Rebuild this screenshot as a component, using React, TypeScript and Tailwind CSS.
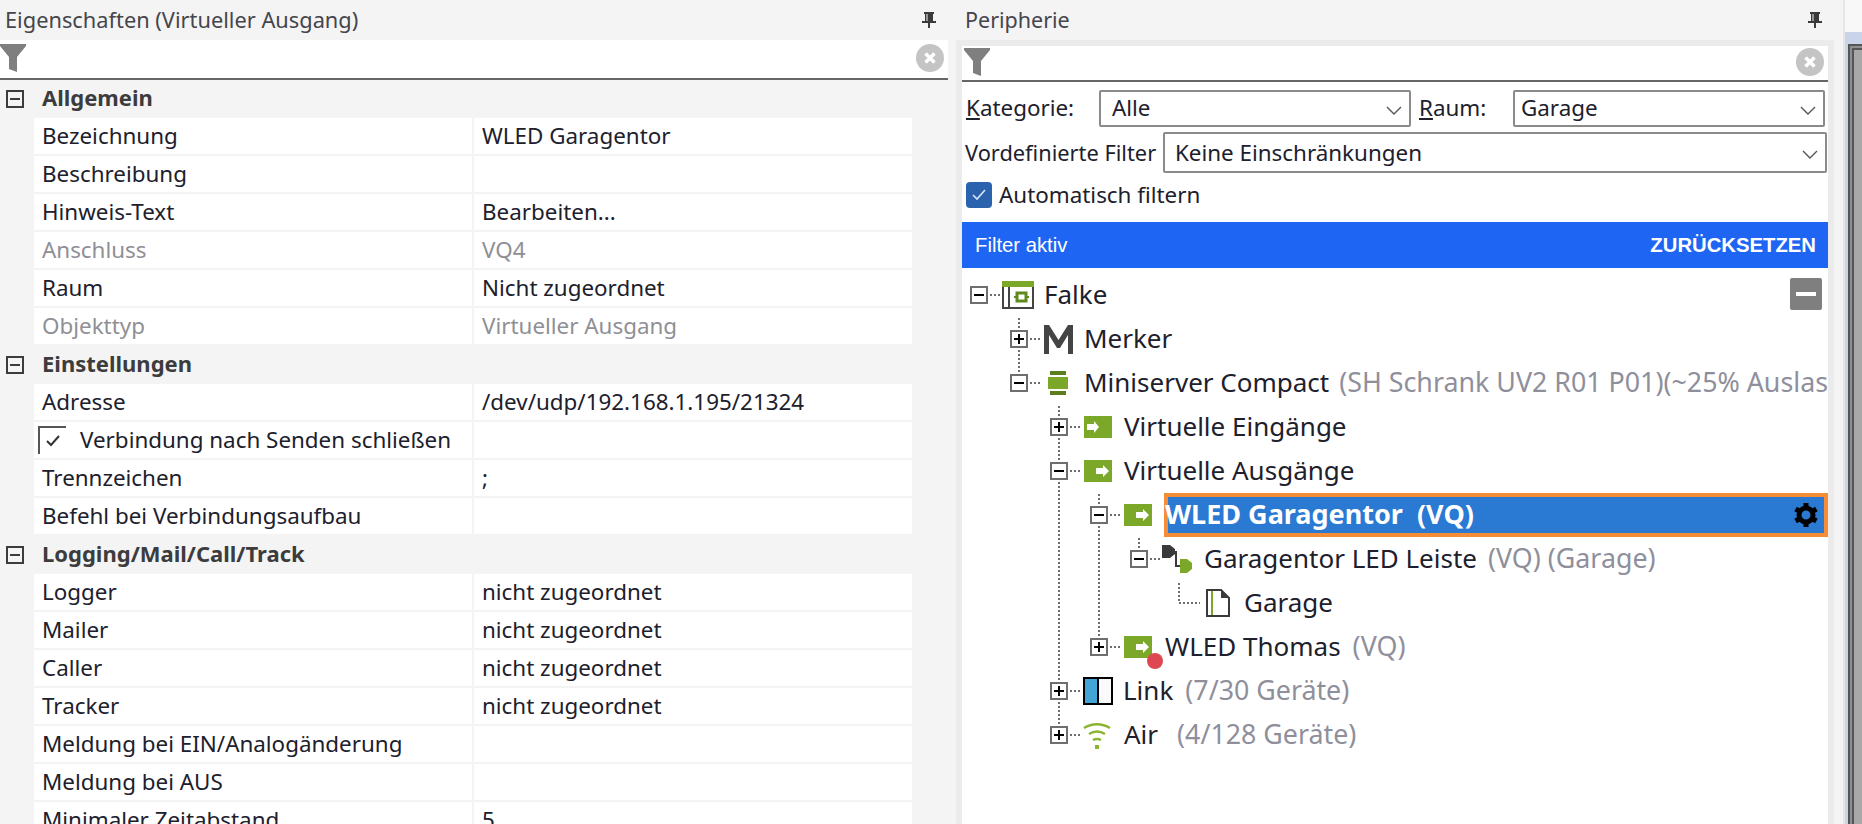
import React from "react";

const font = "font-['Noto_Sans','Open_Sans',sans-serif]";

function PinIcon() {
  return (
    <svg width="14" height="16" viewBox="0 0 14 16">
      <path d="M2 0h10v2h-1v7h3v2h-14v-2h3v-7h-1zM4.500 2v7h1v-7z" fill="#3a3a3a" fillRule="evenodd" />
      <rect x="6" y="11" width="2" height="5" fill="#3a3a3a" />
    </svg>
  );
}

function FunnelIcon() {
  return (
    <svg width="26" height="28" viewBox="0 0 26 28">
      <path d="M0 0h26v2l-9 11v15l-8-3v-12l-9-11z" fill="#7f7f7f" />
    </svg>
  );
}

function ClearIcon() {
  return (
    <svg width="28" height="28" viewBox="0 0 28 28">
      <circle cx="14" cy="14" r="14" fill="#c4c4c4" />
      <path d="M9.500 9.500l9 9M18.500 9.500l-9 9" stroke="#fff" strokeWidth="3.500" />
    </svg>
  );
}

function SectionRow({ title }: { title: string }) {
  return (
    <div className="flex items-center h-[38px]">
      <div className="w-[34px] pl-[6px]">
        <div className="w-[18px] h-[18px] border-2 border-[#3c3c3c] flex items-center justify-center">
          <div className="w-[10px] h-[2px] bg-[#3c3c3c]" />
        </div>
      </div>
      <span className="pl-[8px] pb-[4px] font-bold text-[22px] text-[#3c3c3c]">{title}</span>
    </div>
  );
}

function PropRow({ label, value, muted, check }: { label: string; value?: string; muted?: boolean; check?: boolean }) {
  const color = muted ? "text-[#8f8f95]" : "text-[#20202c]";
  return (
    <div className={`flex gap-[2px] ml-[34px] h-[36px] mb-[2px] w-[878px] ${color}`}>
      <div className="w-[438px] bg-white flex items-center pl-[8px] whitespace-nowrap">
        {check && (
          <div className="w-[28px] h-[28px] -ml-[4px] mr-[14px] border-l-2 border-t-2 border-[#555555] flex items-center justify-center">
            <svg width="16" height="14" viewBox="0 0 16 14" fill="none">
              <path d="M2 7l4 4 8-9" stroke="#333" strokeWidth="2" />
            </svg>
          </div>
        )}
        {label}
      </div>
      <div className="w-[438px] bg-white flex items-center pl-[8px] whitespace-nowrap">{value}</div>
    </div>
  );
}

function Combo({ text, className, textClass }: { text: string; className: string; textClass?: string }) {
  return (
    <div className={`flex items-center justify-between border-2 border-[#8a8a8a] rounded-[2px] bg-white text-[#20202c] ${className}`}>
      <span className={textClass}>{text}</span>
      <svg width="16" height="9" viewBox="0 0 16 9" fill="none" className="mr-[7px] mt-[3px]">
        <path d="M1 1l7 7 7-7" stroke="#555555" strokeWidth="1.400" />
      </svg>
    </div>
  );
}

function Expander({ open }: { open: boolean }) {
  return (
    <div className="w-[18px] h-[18px] shrink-0 border-2 border-[#6e6e6e] bg-white flex items-center justify-center relative">
      <div className="w-[10px] h-[2px] bg-black" />
      {!open && <div className="absolute w-[2px] h-[10px] bg-black" />}
    </div>
  );
}

function ArrowIcon({ input }: { input?: boolean }) {
  return (
    <svg width="28" height="22" viewBox="0 0 28 22">
      <rect width="28" height="22" fill="#7ca82a" />
      <path d={input ? "M3 8h7v-3l5 6-5 6v-3h-7z" : "M12 8h7v-3l6 6-6 6v-3h-7z"} fill="#fff" />
    </svg>
  );
}

function FalkeIcon() {
  return (
    <svg width="32" height="28" viewBox="0 0 32 28" fill="none">
      <rect width="32" height="6" fill="#7ca82a" />
      <path d="M1 6v21h30v-21M7 6v21" stroke="#444" strokeWidth="2" />
      <rect x="15" y="12" width="9" height="8" stroke="#5d8a1e" strokeWidth="3" />
      <path d="M12 16h3M24 16h3" stroke="#5d8a1e" strokeWidth="2" />
    </svg>
  );
}

function MerkerIcon() {
  return (
    <svg width="29" height="29" viewBox="0 0 29 29">
      <path d="M0 29v-29h5l9.500 15 9.500-15h5v29h-5v-19l-8 13h-3l-8-13v19z" fill="#444444" />
    </svg>
  );
}

function MiniserverIcon() {
  return (
    <svg width="20" height="24" viewBox="0 0 20 24">
      <rect x="2" y="0" width="16" height="4" fill="#5b7f1c" />
      <rect x="0" y="6" width="20" height="12" fill="#7ca82a" />
      <rect x="2" y="20" width="16" height="4" fill="#5b7f1c" />
    </svg>
  );
}

function ActuatorIcon() {
  return (
    <svg width="31" height="28" viewBox="0 0 31 28">
      <path d="M0 0h8l5 4v5l-5 4h-8z" fill="#3a3a3a" />
      <path d="M14 6v15h4" fill="none" stroke="#3a3a3a" strokeWidth="2" />
      <path d="M18 14h7l5 4v6l-5 4h-7z" fill="#7ca82a" />
    </svg>
  );
}

function PageIcon() {
  return (
    <svg width="24" height="28" viewBox="0 0 24 28" fill="none">
      <path d="M1 1h14l8 8v18h-22z" stroke="#3a3a3a" strokeWidth="2" fill="#fff" />
      <path d="M15 1l8 8h-8z" fill="#3a3a3a" />
      <rect x="5" y="2" width="2" height="24" fill="#7ca82a" />
    </svg>
  );
}

function LinkIcon() {
  return (
    <svg width="30" height="28" viewBox="0 0 30 28">
      <rect x="1" y="1" width="28" height="26" fill="#fafafa" stroke="#000" strokeWidth="2" />
      <rect x="2" y="2" width="12" height="24" fill="#42a5d5" />
      <rect x="14" y="1" width="2" height="26" fill="#000" />
    </svg>
  );
}

function AirIcon() {
  return (
    <svg width="28" height="28" viewBox="0 0 28 28" fill="none" stroke="#8cb52f" strokeWidth="2.500">
      <path d="M1 7c8-5 18-5 26 0" />
      <path d="M6 13c5-3 11-3 16 0" />
      <path d="M10 19c3-1.500 5-1.500 8 0" />
      <rect x="12" y="24" width="4" height="4" fill="#8cb52f" stroke="none" />
    </svg>
  );
}

function GearIcon() {
  return (
    <svg width="24" height="24" viewBox="0 0 24 24" fill="none" stroke="#000">
      <circle cx="12" cy="12" r="7" strokeWidth="5" />
      <path d="M12 0v5M12 19v5M1.600 6l4.300 2.500M18.100 15.500l4.300 2.500M22.400 6l-4.300 2.500M5.900 15.500l-4.300 2.500" strokeWidth="5" />
    </svg>
  );
}

function TreeLines() {
  return (
    <svg className="absolute left-0 top-0 pointer-events-none" width="866" height="500" fill="none" stroke="#6e6e6e" strokeWidth="2" strokeDasharray="2 2">
      <path d="M28 27h12M68 71h12M68 115h12M108 159h12M108 203h12M148 247h12M188 291h12M148 379h12M108 423h12M108 467h12" />
      <path d="M57 50v54M97 138v320M137 226v144M177 270v11M217 315v20h21" />
    </svg>
  );
}

export default function App() {
  return (
    <div className={`w-[1862px] h-[824px] overflow-hidden flex bg-[#f4f4f4] text-[22.4px] leading-[28px] ${font}`}>
      {/* Eigenschaften */}
      <div className="w-[948px] shrink-0">
        <div className="h-[40px] flex items-center justify-between pl-[5px] pr-[12px] text-[21.8px] text-[#45454c]">
          <span>Eigenschaften (Virtueller Ausgang)</span>
          <PinIcon />
        </div>
        <div className="h-[40px] flex justify-between items-start pt-[4px] pr-[4px] bg-white border-b-2 border-[#666666]">
          <FunnelIcon />
          <ClearIcon />
        </div>
        <SectionRow title="Allgemein" />
        <PropRow label="Bezeichnung" value="WLED Garagentor" />
        <PropRow label="Beschreibung" />
        <PropRow label="Hinweis-Text" value="Bearbeiten..." />
        <PropRow label="Anschluss" value="VQ4" muted />
        <PropRow label="Raum" value="Nicht zugeordnet" />
        <PropRow label="Objekttyp" value="Virtueller Ausgang" muted />
        <SectionRow title="Einstellungen" />
        <PropRow label="Adresse" value="/dev/udp/192.168.1.195/21324" />
        <PropRow label="Verbindung nach Senden schließen" check />
        <PropRow label="Trennzeichen" value=";" />
        <PropRow label="Befehl bei Verbindungsaufbau" />
        <SectionRow title="Logging/Mail/Call/Track" />
        <PropRow label="Logger" value="nicht zugeordnet" />
        <PropRow label="Mailer" value="nicht zugeordnet" />
        <PropRow label="Caller" value="nicht zugeordnet" />
        <PropRow label="Tracker" value="nicht zugeordnet" />
        <PropRow label="Meldung bei EIN/Analogänderung" />
        <PropRow label="Meldung bei AUS" />
        <PropRow label="Minimaler Zeitabstand" value="5" />
      </div>

      {/* Peripherie */}
      <div className="w-[878px] shrink-0 ml-[8px]">
        <div className="h-[40px] flex items-center justify-between pl-[9px] pr-[12px] text-[21.5px] text-[#45454c]">
          <span>Peripherie</span>
          <PinIcon />
        </div>
        <div className="border-[6px] border-[#ebebeb] h-[790px] bg-white overflow-hidden">
          <div className="h-[36px] flex justify-between items-start pt-[2px] pl-[2px] pr-[4px] border-b-2 border-[#666666]">
            <FunnelIcon />
            <ClearIcon />
          </div>
          <div className="flex items-center mt-[8px] h-[37px]">
            <span className="pl-[4px] pb-[2px] w-[137px] text-[#20202c]"><u>K</u>ategorie:</span>
            <Combo text="Alle" className="w-[312px] h-[37px] pl-[11px]" textClass="pb-[2px]" />
            <span className="pl-[8px] pb-[2px] w-[102px] text-[#20202c]"><u>R</u>aum:</span>
            <Combo text="Garage" className="w-[312px] h-[37px] pl-[6px]" textClass="pb-[2px]" />
          </div>
          <div className="flex items-center mt-[5px] h-[41px]">
            <span className="pl-[3px] w-[201px] whitespace-nowrap text-[21.8px] text-[#20202c]">Vordefinierte Filter</span>
            <Combo text="Keine Einschränkungen" className="w-[664px] h-[41px] pl-[10px]" />
          </div>
          <div className="flex items-center mt-[9px] h-[26px] pl-[4px] text-[#20202c]">
            <div className="w-[26px] h-[26px] rounded-[4px] bg-[#2a62ad] flex items-center justify-center">
              <svg width="16" height="14" viewBox="0 0 16 14" fill="none">
                <path d="M2 7l4 4 8-9" stroke="#dbe6f5" strokeWidth="1.600" />
              </svg>
            </div>
            <span className="ml-[7px]">Automatisch filtern</span>
          </div>
          <div className="mt-[14px] h-[46px] bg-[#1e65f4] text-white flex items-center justify-between pl-[13px] pr-[12px] font-['Liberation_Sans',sans-serif] text-[20.3px]">
            <span>Filter aktiv</span>
            <span className="font-bold">ZURÜCKSETZEN</span>
          </div>

          {/* Baum */}
          <div className="relative text-[26px] pt-[5px] text-[#20202c]">
            <TreeLines />
            <div className="absolute right-[6px] top-[10px] w-[32px] h-[32px] bg-[#7f7f7f] rounded-[2px] flex items-center justify-center">
              <div className="w-[20px] h-[4px] bg-white" />
            </div>

            <div className="h-[44px] flex items-center pl-[8px] whitespace-nowrap">
              <Expander open />
              <div className="ml-[14px] shrink-0"><FalkeIcon /></div>
              <span className="ml-[10px] pb-[2px]">Falke</span>
            </div>
            <div className="h-[44px] flex items-center pl-[48px] whitespace-nowrap">
              <Expander open={false} />
              <div className="ml-[16px] shrink-0"><MerkerIcon /></div>
              <span className="ml-[11px] pb-[2px]">Merker</span>
            </div>
            <div className="h-[44px] flex items-center pl-[48px] whitespace-nowrap">
              <Expander open />
              <div className="ml-[20px] shrink-0"><MiniserverIcon /></div>
              <span className="ml-[16px] pb-[2px]">Miniserver Compact</span>
              <span className="ml-[10px] pb-[2px] text-[26.8px] text-[#8f8f9c]">(SH Schrank UV2 R01 P01)(~25% Auslastung)</span>
            </div>
            <div className="h-[44px] flex items-center pl-[88px] whitespace-nowrap">
              <Expander open={false} />
              <div className="ml-[16px] shrink-0"><ArrowIcon input /></div>
              <span className="ml-[12px] pb-[2px]">Virtuelle Eingänge</span>
            </div>
            <div className="h-[44px] flex items-center pl-[88px] whitespace-nowrap">
              <Expander open />
              <div className="ml-[16px] shrink-0"><ArrowIcon /></div>
              <span className="ml-[12px] pb-[2px]">Virtuelle Ausgänge</span>
            </div>
            <div className="h-[44px] flex items-center pl-[128px]">
              <Expander open />
              <div className="ml-[16px] shrink-0"><ArrowIcon /></div>
              <div className="ml-[12px] flex-1 h-[44px] border-[4px] border-[#f58c36] bg-[#2a79d3] flex items-center justify-between text-white font-bold text-[27px] pr-[6px] whitespace-nowrap">
                <span className="-ml-[3px] pb-[2px]">WLED Garagentor&nbsp; (VQ)</span>
                <GearIcon />
              </div>
            </div>
            <div className="h-[44px] flex items-center pl-[168px] whitespace-nowrap">
              <Expander open />
              <div className="ml-[14px] shrink-0"><ActuatorIcon /></div>
              <span className="ml-[11px] pb-[2px]">Garagentor LED Leiste</span>
              <span className="ml-[11px] pb-[2px] text-[26.8px] text-[#8f8f9c]">(VQ) (Garage)</span>
            </div>
            <div className="h-[44px] flex items-center pl-[244px] whitespace-nowrap">
              <PageIcon />
              <span className="ml-[14px] pb-[2px]">Garage</span>
            </div>
            <div className="h-[44px] flex items-center pl-[128px] whitespace-nowrap">
              <Expander open={false} />
              <div className="ml-[16px] shrink-0 relative">
                <ArrowIcon />
                <div className="absolute -right-[11px] -bottom-[11px] w-[16px] h-[16px] rounded-full bg-[#de4651]" />
              </div>
              <span className="ml-[13px] pb-[2px]">WLED Thomas</span>
              <span className="ml-[12px] pb-[2px] text-[26.8px] text-[#8f8f9c]">(VQ)</span>
            </div>
            <div className="h-[44px] flex items-center pl-[88px] whitespace-nowrap">
              <Expander open={false} />
              <div className="ml-[15px] shrink-0"><LinkIcon /></div>
              <span className="ml-[10px] pb-[2px]">Link</span>
              <span className="ml-[12px] pb-[2px] text-[26.8px] text-[#8f8f9c]">(7/30 Geräte)</span>
            </div>
            <div className="h-[44px] flex items-center pl-[88px] whitespace-nowrap">
              <Expander open={false} />
              <div className="ml-[15px] shrink-0"><AirIcon /></div>
              <span className="ml-[13px] pb-[2px]">Air</span>
              <span className="ml-[19px] pb-[2px] text-[26.8px] text-[#8f8f9c]">(4/128 Geräte)</span>
            </div>
          </div>
        </div>
      </div>

      {/* rand vom Nachbarfenster */}
      <div className="flex-1 ml-[9px] border-l-2 border-[#e6e6e6] bg-[#f8f8f8] pt-[32px]">
        <div className="h-full bg-[#c9d4ea] pl-[3px] pt-[12px]">
          <div className="h-full border-l-2 border-t-2 border-[#555555] bg-[#8f8f8f] pl-[2px] pt-[2px]">
            <div className="h-full border-l-2 border-t-2 border-[#555555] bg-[#a8a8a8]" />
          </div>
        </div>
      </div>
    </div>
  );
}
